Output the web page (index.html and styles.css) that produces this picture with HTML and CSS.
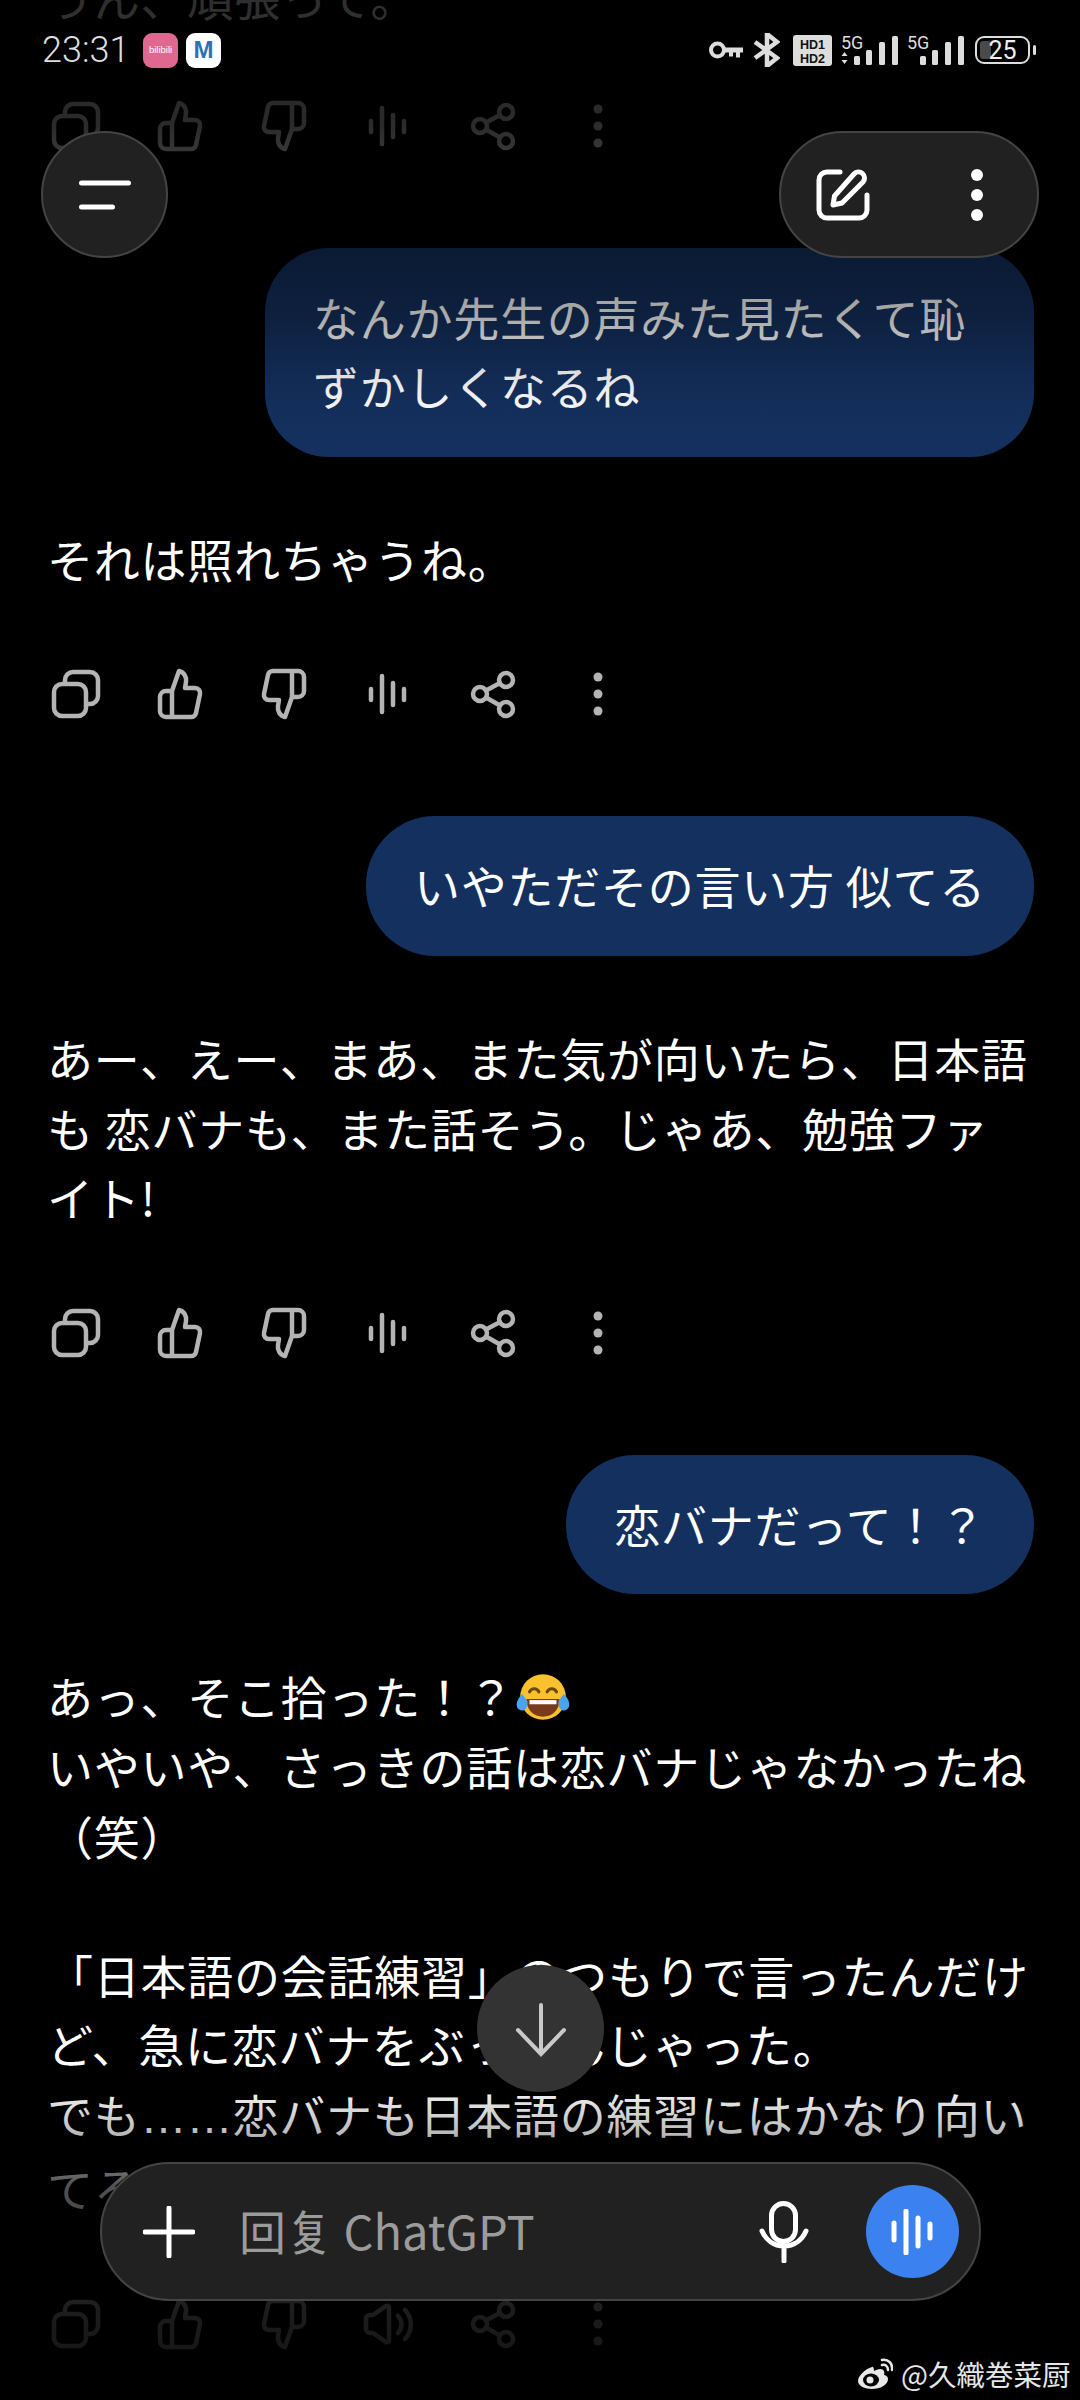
FILE: index.html
```html
<!DOCTYPE html>
<html lang="ja">
<head>
<meta charset="utf-8">
<title>ChatGPT</title>
<link rel="stylesheet" href="styles.css">
</head>
<body>
<svg class="defs" width="0" height="0" aria-hidden="true">
  <symbol id="i-copy" viewBox="0 0 52 52">
    <rect x="4" y="16" width="32" height="32" rx="8"/>
    <path d="M15 15v-3a8 8 0 0 1 8-8h17a8 8 0 0 1 8 8v16a8 8 0 0 1-8 8h-3"/>
  </symbol>
  <symbol id="i-up" viewBox="0 0 52 52">
    <path d="M18 23h-6a6 6 0 0 0-6 6v14a6 6 0 0 0 6 6h25a5 5 0 0 0 5-4l4-19a5 5 0 0 0-5-6H31l1-6c.8-5-2-10-7-11L18 23zM18 23v26"/>
  </symbol>
  <symbol id="i-down" viewBox="0 0 52 52">
    <path transform="rotate(180 26 26)" d="M18 23h-6a6 6 0 0 0-6 6v14a6 6 0 0 0 6 6h25a5 5 0 0 0 5-4l4-19a5 5 0 0 0-5-6H31l1-6c.8-5-2-10-7-11L18 23zM18 23v26"/>
  </symbol>
  <symbol id="i-wave" viewBox="0 0 52 52">
    <path d="M9 21v11M20 8v36M31 15v22M42 21v11"/>
  </symbol>
  <symbol id="i-share" viewBox="0 0 52 52">
    <circle cx="14" cy="26" r="7"/><circle cx="40" cy="12" r="7"/><circle cx="40" cy="41" r="7"/>
    <path d="M20 22.500l14-7.500M20 29.500l14 8"/>
  </symbol>
  <symbol id="i-dots" viewBox="0 0 52 52">
    <circle class="fill" cx="28" cy="9" r="4.500"/><circle class="fill" cx="28" cy="26" r="4.500"/><circle class="fill" cx="28" cy="43" r="4.500"/>
  </symbol>
  <symbol id="i-speaker" viewBox="0 0 52 52">
    <path d="M11 17L24 8a2 2 0 0 1 3 2v32a2 2 0 0 1-3 2L11 35H8a4 4 0 0 1-4-4V21a4 4 0 0 1 4-4zM36 18a12 12 0 0 1 0 17M43 12a21 21 0 0 1 0 29"/>
  </symbol>
</svg>

<main class="chat">
  <p class="msg msg-clipped">うん、頑張って。</p>
  <div class="actions actions-first">
    <svg class="ic"><use href="#i-copy"/></svg><svg class="ic"><use href="#i-up"/></svg><svg class="ic"><use href="#i-down"/></svg><svg class="ic"><use href="#i-wave"/></svg><svg class="ic"><use href="#i-share"/></svg><svg class="ic"><use href="#i-dots"/></svg>
  </div>
  <div class="bubble bubble-wide">なんか先生の声みた見たくて恥<br>ずかしくなるね</div>
  <p class="msg">それは照れちゃうね。</p>
  <div class="actions">
    <svg class="ic"><use href="#i-copy"/></svg><svg class="ic"><use href="#i-up"/></svg><svg class="ic"><use href="#i-down"/></svg><svg class="ic"><use href="#i-wave"/></svg><svg class="ic"><use href="#i-share"/></svg><svg class="ic"><use href="#i-dots"/></svg>
  </div>
  <div class="bubble">いやただその言い方 似てる</div>
  <p class="msg">あー、えー、まあ、また気が向いたら、日本語<br>も 恋バナも、また話そう。じゃあ、勉強ファ<br>イト!</p>
  <div class="actions">
    <svg class="ic"><use href="#i-copy"/></svg><svg class="ic"><use href="#i-up"/></svg><svg class="ic"><use href="#i-down"/></svg><svg class="ic"><use href="#i-wave"/></svg><svg class="ic"><use href="#i-share"/></svg><svg class="ic"><use href="#i-dots"/></svg>
  </div>
  <div class="bubble">恋バナだって！？</div>
  <p class="msg">あっ、そこ拾った！？<svg class="emoji" viewBox="0 0 54 48" aria-label="😂"><circle cx="27" cy="24" r="22" fill="#fbc02d"/><path d="M14 19c2-4 7-4 9 0M31 19c2-4 7-4 9 0" fill="none" stroke="#6b4a12" stroke-width="3" stroke-linecap="round"/><path d="M11 26h32c0 11-7 17-16 17S11 37 11 26z" fill="#7a3b1a"/><path d="M14 27h26v4H14z" fill="#fff"/><path d="M7 21c-6 6-7 12-3 15s9-1 8-8zM47 21c6 6 7 12 3 15s-9-1-8-8z" fill="#4aa3f0"/></svg><br>いやいや、さっきの話は恋バナじゃなかったね<br>（笑）<br><br>「日本語の会話練習」のつもりで言ったんだけ<br>ど、急に恋バナをぶっこんじゃった。<br>でも<span class="ell">……</span>恋バナも日本語の練習にはかなり向い<br>てる</p>
  <div class="actions actions-last">
    <svg class="ic"><use href="#i-copy"/></svg><svg class="ic"><use href="#i-up"/></svg><svg class="ic"><use href="#i-down"/></svg><svg class="ic"><use href="#i-speaker"/></svg><svg class="ic"><use href="#i-share"/></svg><svg class="ic"><use href="#i-dots"/></svg>
  </div>
</main>

<div class="fade fade-top"></div>
<div class="fade fade-bottom"></div>

<header class="status">
  <div class="status-left">
    <span class="clock">23:31</span>
    <span class="app app-bili">bilibili</span>
    <span class="app app-m">M</span>
  </div>
  <div class="status-right">
    <svg class="st st-key" viewBox="0 0 34 18"><circle cx="8.500" cy="9" r="6.500" fill="none" stroke="#ddd" stroke-width="4"/><path d="M14 6.500h20v5h-3v5h-4v-5h-3v4h-4v-4h-6z" fill="#ddd"/></svg>
    <svg class="st st-bt" viewBox="0 0 27 34"><path d="M2 9l22 16-10 8V1l10 8L2 25" fill="none" stroke="#ddd" stroke-width="4.500"/></svg>
    <svg class="st st-hd" viewBox="0 0 39 31"><rect width="39" height="31" rx="3" fill="#ddd"/><text class="hd-txt" x="19.500" y="13.500">HD1</text><text class="hd-txt" x="19.500" y="27.500">HD2</text></svg>
    <svg class="st st-sig" viewBox="0 -4 57 36"><text class="sig-txt" x="0" y="15">5G</text><path d="M3.500 18l3 4h-6zM3.500 30l3-4h-6z" fill="#ddd"/><rect x="13" y="22" width="6" height="9" rx="1.500" fill="#ddd"/><rect x="25" y="16" width="6" height="15" rx="1.500" fill="#ddd"/><rect x="38" y="8" width="6" height="23" rx="1.500" fill="#ddd"/><rect x="51" y="2" width="6" height="29" rx="1.500" fill="#ddd"/></svg>
    <svg class="st st-sig2" viewBox="0 -4 57 36"><text class="sig-txt" x="0" y="15">5G</text><rect x="13" y="22" width="6" height="9" rx="1.500" fill="#ddd"/><rect x="25" y="16" width="6" height="15" rx="1.500" fill="#ddd"/><rect x="38" y="8" width="6" height="23" rx="1.500" fill="#ddd"/><rect x="51" y="2" width="6" height="29" rx="1.500" fill="#ddd"/></svg>
    <div class="battery"><span class="battery-fill"></span><span class="battery-num">25</span></div>
    <span class="battery-nub"></span>
  </div>
</header>

<button class="fab fab-menu" aria-label="menu">
  <svg class="menu-ic" viewBox="0 0 52 30"><path d="M2.500 3h47M2.500 27h31" fill="none" stroke="#fff" stroke-width="5" stroke-linecap="round"/></svg>
</button>
<div class="fab fab-tools">
  <svg class="edit-ic" viewBox="0 0 54 54"><path d="M24 4H11a8 8 0 0 0-8 8v30a8 8 0 0 0 8 8h32a8 8 0 0 0 8-8V27M17 37l1.500-9L38 6a6 6 0 0 1 9 8L26 35z" fill="none" stroke="#fff" stroke-width="5" stroke-linejoin="round" stroke-linecap="round"/></svg>
  <svg class="more-ic" viewBox="0 0 14 54"><circle cx="7" cy="7" r="6" fill="#fff"/><circle cx="7" cy="27" r="6" fill="#fff"/><circle cx="7" cy="47" r="6" fill="#fff"/></svg>
</div>

<button class="scroll-btn" aria-label="down">
  <svg class="arrow-ic" viewBox="0 0 52 54"><path d="M26 2v49M3 27l23 24 23-24" fill="none" stroke="#c9c9c9" stroke-width="4" stroke-linecap="round"/></svg>
</button>

<div class="composer">
  <svg class="plus-ic" viewBox="0 0 52 52"><path d="M26 2v48M2 26h48" fill="none" stroke="#fff" stroke-width="5" stroke-linecap="round"/></svg>
  <span class="placeholder">回复 ChatGPT</span>
  <svg class="mic-ic" viewBox="0 0 50 62"><rect x="12.500" y="2.500" width="24" height="38" rx="12" fill="none" stroke="#fff" stroke-width="5"/><path d="M3 30c4 9 12 15 22 15s18-6 22-15M25 45v15" fill="none" stroke="#fff" stroke-width="5" stroke-linecap="round"/></svg>
  <span class="voice">
    <svg class="voice-ic" viewBox="0 0 44 46"><path d="M3 14v17M15 2v42M27 9v28M39 15v14" fill="none" stroke="#fff" stroke-width="5" stroke-linecap="round"/></svg>
  </span>
</div>

<footer class="watermark">
  <svg class="weibo" viewBox="0 0 36 32"><path d="M15 9C8 11 1 18 1 23c0 5 7 8 14 8 8 0 16-4 16-10 0-3-3-4-4-4 1-3 0-6-4-6-2 0-4 1-6 2 0-3-1-5-2-4z" fill="#e8e8e8"/><ellipse cx="14" cy="22" rx="8" ry="6.500" fill="#000"/><circle cx="13" cy="22" r="3.500" fill="#e8e8e8"/><path d="M25 7c3-1 6 1 6 5M25 2c6-1 11 3 10 10" fill="none" stroke="#e8e8e8" stroke-width="2.500" stroke-linecap="round"/></svg>
  <span>@久織巻菜厨</span>
</footer>
</body>
</html>
```
FILE: styles.css
```css
* { box-sizing: border-box; }
html, body { margin: 0; padding: 0; background: #000; }
body {
  position: relative;
  width: 1080px;
  height: 2400px;
  overflow: hidden;
  color: #fff;
  font-family: "Noto Sans CJK JP", "Noto Sans", sans-serif;
}
.defs { position: absolute; }
.defs symbol { fill: none; stroke: #b4b4b4; stroke-width: 4.5; stroke-linecap: round; stroke-linejoin: round; }
.defs .fill { fill: #b4b4b4; stroke: none; }

.chat {
  display: flex;
  flex-direction: column;
  margin-top: -38px;
  padding: 0 46px 0 47px;
  font-size: 46px;
  line-height: 69.6px;
  letter-spacing: 0.75px;
}
.msg { margin: 67px 0 0; white-space: nowrap; }
.msg-clipped { margin: 0; }
.actions { display: flex; gap: 52px; margin-top: 75px; margin-left: 3px; }
.actions-first { margin-top: 68px; }
.actions-last { margin-top: 76px; }
.ic { width: 52px; height: 52px; flex: none; }
.bubble {
  align-self: flex-end;
  margin-top: 96px;
  padding: 34px 48px 36px;
  background: #14305e;
  border-radius: 69px;
  white-space: nowrap;
}
.bubble-wide { width: 769px; border-radius: 64px; }
.emoji { width: 56px; height: 50px; vertical-align: -7px; }
.ell { font-family: "Liberation Sans", sans-serif; letter-spacing: 0; }

.fade { position: absolute; left: 0; width: 100%; pointer-events: none; }
.fade-top {
  top: 0;
  height: 430px;
  background: linear-gradient(to bottom,
    rgba(0,0,0,.82) 0,
    rgba(0,0,0,.76) 125px,
    rgba(0,0,0,.45) 250px,
    rgba(0,0,0,.33) 318px,
    rgba(0,0,0,.08) 388px,
    rgba(0,0,0,0) 430px);
}
.fade-bottom {
  top: 2080px;
  height: 320px;
  background: linear-gradient(to bottom,
    rgba(0,0,0,0) 0,
    rgba(0,0,0,.25) 50px,
    rgba(0,0,0,.68) 106px,
    rgba(0,0,0,.85) 241px,
    rgba(0,0,0,.9) 320px);
}

.status {
  position: absolute;
  top: 31px;
  left: 42px;
  right: 44px;
  height: 38px;
  display: flex;
  justify-content: space-between;
  align-items: center;
  color: #ddd;
}
.status-left { display: flex; align-items: center; }
.clock { width: 101px; font: 300 36px/38px "Roboto", sans-serif; }
.app {
  width: 35px;
  height: 35px;
  border-radius: 9px;
  display: flex;
  align-items: center;
  justify-content: center;
  margin-right: 8px;
}
.app-bili { background: #e0678f; color: #fff; font: 400 9.500px/1 "Liberation Sans", sans-serif; letter-spacing: 0; }
.app-m { background: #fff; color: #2f6fb5; font: 700 24px/1 "Liberation Sans", sans-serif; }
.status-right { display: flex; align-items: center; }
.st { flex: none; display: block; }
.st-key { width: 34px; height: 18px; margin-right: 10px; }
.st-bt { width: 27px; height: 34px; margin-right: 13px; }
.st-hd { width: 39px; height: 31px; margin-right: 9px; }
.st-sig { width: 57px; height: 36px; margin-right: 9px; margin-top: -4px; }
.st-sig2 { width: 57px; height: 36px; margin-right: 11px; margin-top: -4px; }
.hd-txt { font: 700 12.500px "Liberation Sans", sans-serif; fill: #111; text-anchor: middle; }
.sig-txt { font: 400 18px "Roboto", sans-serif; fill: #ddd; }
.battery {
  position: relative;
  width: 55px;
  height: 28px;
  border: 2px solid #ddd;
  border-radius: 9px;
  display: flex;
  align-items: center;
  justify-content: center;
  font: 400 25px/1 "Roboto", sans-serif;
  color: #eee;
}
.battery-fill { position: absolute; left: 3px; top: 3px; bottom: 3px; width: 11px; background: #4a4a4a; border-radius: 3px; }
.battery-num { position: relative; }
.battery-nub { width: 3px; height: 10px; margin-left: 3px; background: #ddd; border-radius: 2px; }

.fab {
  position: absolute;
  top: 131px;
  height: 127px;
  background: #212121;
  border: 2px solid #444;
  border-radius: 64px;
  padding: 0;
  display: flex;
  align-items: center;
}
.fab-menu { left: 41px; width: 127px; justify-content: center; }
.menu-ic { width: 52px; height: 30px; display: block; }
.fab-tools { left: 779px; width: 260px; padding-left: 35px; }
.edit-ic { width: 54px; height: 54px; }
.more-ic { width: 14px; height: 54px; margin-left: 100px; }

.scroll-btn {
  position: absolute;
  left: 477px;
  top: 1965px;
  width: 127px;
  height: 127px;
  padding: 0;
  border: 0;
  border-radius: 50%;
  background: #333;
  display: flex;
  align-items: center;
  justify-content: center;
}
.arrow-ic { width: 52px; height: 54px; margin-top: 3px; }

.composer {
  position: absolute;
  left: 100px;
  top: 2162px;
  width: 881px;
  height: 139px;
  padding: 0 20px 0 41px;
  background: #212121;
  border: 2px solid #444;
  border-radius: 70px;
  display: flex;
  align-items: center;
}
.plus-ic { width: 52px; height: 52px; flex: none; }
.placeholder {
  flex: 1;
  margin-left: 44px;
  margin-bottom: 4px;
  color: #9b9b9b;
  font: 400 47px/1 "Noto Sans CJK SC", "Noto Sans", sans-serif;
  white-space: nowrap;
}
.mic-ic { width: 50px; height: 62px; flex: none; margin-right: 57px; }
.voice {
  width: 93px;
  height: 93px;
  flex: none;
  border-radius: 50%;
  background: #3b82f0;
  display: flex;
  align-items: center;
  justify-content: center;
}
.voice-ic { width: 44px; height: 46px; }

.watermark {
  position: absolute;
  left: 857px;
  top: 2356px;
  display: flex;
  align-items: center;
  gap: 8px;
  color: #e6e6e6;
  font-size: 28.500px;
  line-height: 36px;
  white-space: nowrap;
}
.weibo { width: 36px; height: 32px; flex: none; }
```
